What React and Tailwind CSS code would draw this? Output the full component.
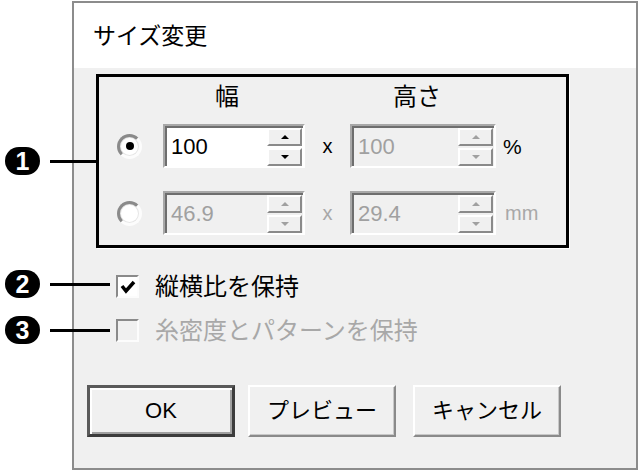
import React from "react";

function Callout({ n, top, lineWidth }) {
  return (
    <div className="absolute left-[5px] flex items-center" style={{ top }}>
      <div className="flex h-[28px] w-[35px] items-center justify-center rounded-full bg-black text-[25px] font-bold leading-none text-white">
        {n}
      </div>
      <div className="ml-[10px] h-[3px] bg-black" style={{ width: lineWidth }} />
    </div>
  );
}

function Radio({ checked }) {
  return (
    <div className="flex h-[25px] w-[25px] items-center justify-center rounded-full border-[3px] border-t-[#8a8a8a] border-l-[#8a8a8a] border-r-[#fcfcfc] border-b-[#fcfcfc] bg-[#e6e6e6]">
      <div className="flex h-[17px] w-[17px] items-center justify-center rounded-full bg-white">
        {checked && <div className="h-[8px] w-[8px] rounded-full bg-black" />}
      </div>
    </div>
  );
}

function SpinButton({ up, disabled }) {
  const fill = disabled ? "#a0a0a0" : "#000";
  return (
    <div className="flex h-[18px] items-center justify-center border-2 border-t-white border-l-white border-r-[#8a8a8a] border-b-[#8a8a8a] bg-[#f0f0f0]">
      <svg width="8" height="4" viewBox="0 0 8 4">
        {up ? <polygon points="0,4 8,4 4,0" fill={fill} /> : <polygon points="0,0 8,0 4,4" fill={fill} />}
      </svg>
    </div>
  );
}

function NumberField({ value, disabled, width }) {
  return (
    <div
      className="h-[44px] border-2 border-t-[#a8a8a8] border-l-[#a8a8a8] border-r-white border-b-white"
      style={{ width }}
    >
      <div
        className={`flex h-full border-t-2 border-l-2 border-[#6e6e6e] ${
          disabled ? "bg-[#f0f0f0] text-[#a0a0a0]" : "bg-white text-black"
        }`}
      >
        <div className="flex flex-1 items-center pl-[4px] text-[22px] leading-none">{value}</div>
        <div className="flex w-[36px] flex-col justify-center gap-[2px] pr-px">
          <SpinButton up disabled={disabled} />
          <SpinButton disabled={disabled} />
        </div>
      </div>
    </div>
  );
}

function Checkbox({ checked, disabled, label }) {
  return (
    <div className="flex h-[23px] items-center">
      <div
        className={`flex h-[23px] w-[23px] items-center justify-center border-2 border-t-[#8a8a8a] border-l-[#8a8a8a] border-r-[#fcfcfc] border-b-[#fcfcfc] ${
          disabled ? "bg-[#f0f0f0]" : "bg-white"
        }`}
      >
        {checked && (
          <svg width="16" height="14" viewBox="0 0 16 14">
            <polyline points="2,6 6,11 14,2" fill="none" stroke="#000" strokeWidth="3.5" />
          </svg>
        )}
      </div>
      <span className={`ml-[16px] text-[24px] leading-none ${disabled ? "text-[#a8a8a8]" : "text-black"}`}>
        {label}
      </span>
    </div>
  );
}

function Button({ children, primary, className = "" }) {
  return (
    <div
      className={`flex h-[52px] w-[148px] items-center justify-center bg-[#f0f0f0] text-[22px] leading-none text-black ${
        primary
          ? "border-[3px] border-t-[#5a5a5a] border-l-[#5a5a5a] border-r-[#3c3c3c] border-b-[#3c3c3c] shadow-[inset_2px_2px_0_#fff,inset_-2px_-2px_0_#a0a0a0]"
          : "border-2 border-t-white border-l-white border-r-[#8a8a8a] border-b-[#8a8a8a] shadow-[inset_-1px_-1px_0_#c8c8c8]"
      } ${className}`}
    >
      {children}
    </div>
  );
}

export default function App() {
  return (
    <div className="relative h-[472px] w-[640px] overflow-hidden bg-white font-['Liberation_Sans','Noto_Sans_CJK_JP',sans-serif]">
      <div className="ml-[72px] pt-px">
        <div className="flex h-[469px] w-[566px] flex-col border-2 border-[#8c8c8c]">
          <div className="h-[65px] bg-white pl-[19px] pt-[22px] text-[23px] leading-none text-black">サイズ変更</div>

          <div className="flex-1 bg-[#f0f0f0] pl-[22px] pt-[6px]">
            {/* size group */}
            <div className="h-[174px] w-[473px] border-[3px] border-black shadow-[1px_1px_0_#fff]">
              <div className="grid grid-cols-[64px_142px_45px_146px_1fr]">
                <div className="h-[47px]" />
                <div className="pr-[14px] pt-[8px] text-center text-[24px] leading-none">幅</div>
                <div />
                <div className="pr-[12px] pt-[8px] text-center text-[24px] leading-none">高さ</div>
                <div />

                <div className="flex items-center pl-[18px]">
                  <Radio checked />
                </div>
                <NumberField value="100" width={142} />
                <div className="flex items-center justify-center text-[20px] leading-none">x</div>
                <NumberField value="100" disabled width={146} />
                <div className="flex items-center pl-[7px] text-[21px] leading-none">%</div>

                <div className="col-span-5 h-[23px]" />

                <div className="flex items-center pl-[18px]">
                  <Radio />
                </div>
                <NumberField value="46.9" disabled width={142} />
                <div className="flex items-center justify-center text-[20px] leading-none text-[#a8a8a8]">x</div>
                <NumberField value="29.4" disabled width={146} />
                <div className="flex items-center pl-[9px] text-[20px] leading-none text-[#a8a8a8]">mm</div>
              </div>
            </div>

            <div className="ml-[20px] mt-[27px] flex flex-col gap-[21px]">
              <Checkbox checked label="縦横比を保持" />
              <Checkbox disabled label="糸密度とパターンを保持" />
            </div>

            <div className="ml-[-9px] mt-[43px] flex">
              <Button primary>OK</Button>
              <Button className="ml-[13px] w-[147px]">プレビュー</Button>
              <Button className="ml-[17px]">キャンセル</Button>
            </div>
          </div>
        </div>
      </div>

      <Callout n="1" top={147} lineWidth={49} />
      <Callout n="2" top={270} lineWidth={60} />
      <Callout n="3" top={316} lineWidth={60} />
    </div>
  );
}
